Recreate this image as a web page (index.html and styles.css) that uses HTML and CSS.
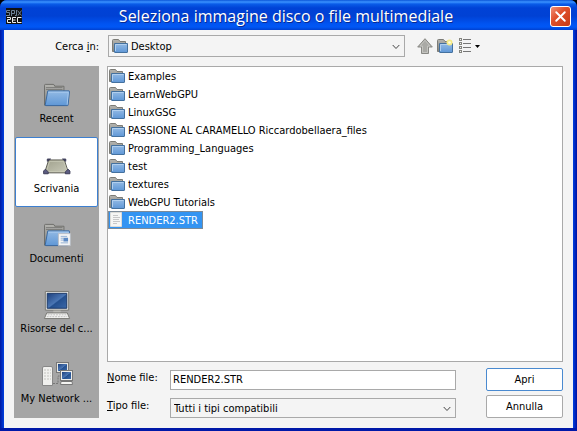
FILE: index.html
```html
<!DOCTYPE html>
<html lang="it">
<head>
<meta charset="utf-8">
<title>Seleziona immagine disco o file multimediale</title>
<link rel="stylesheet" href="styles.css">
</head>
<body>
<svg class="defs" aria-hidden="true">
  <defs>
    <linearGradient id="blue" x1="0" y1="0" x2="0" y2="1"><stop offset="0" stop-color="#93bae4"/><stop offset="1" stop-color="#5f97d6"/></linearGradient>
    <linearGradient id="gray" x1="0" y1="0" x2="0" y2="1"><stop offset="0" stop-color="#b4b4b0"/><stop offset="1" stop-color="#85857f"/></linearGradient>
    <linearGradient id="screen" x1="0" y1="0" x2="1" y2="1"><stop offset="0" stop-color="#1c3f7c"/><stop offset=".5" stop-color="#4a76b4"/><stop offset=".55" stop-color="#24508f"/><stop offset="1" stop-color="#3b68a8"/></linearGradient>
    <linearGradient id="desk" x1="0" y1="0" x2="1" y2="1"><stop offset="0" stop-color="#9fa08c"/><stop offset="1" stop-color="#c9cab9"/></linearGradient>
    <symbol id="folder" viewBox="0 0 16 16">
      <path d="M.5 13.500V2.500Q.5 1.500 1.500 1.500H6.500L8 3.500H13.500V13.500Z" fill="url(#gray)" stroke="#7c7c77"/>
      <path d="M2.500 5.500H15.500V14Q15.500 14.500 15 14.500H3Q2.500 14.500 2.500 14Z" fill="url(#blue)" stroke="#44719f"/>
      <path d="M3.500 13V6.500H14.500" fill="none" stroke="#b1cfee"/>
    </symbol>
    <symbol id="big-folder" viewBox="0 0 30 26">
      <path d="M1.500 24V2.500Q1.500 1.500 2.500 1.500H11Q12 1.500 12.500 3.500H22.500V24Z" fill="url(#gray)" stroke="#696966"/>
      <path d="M3 5H21M3 7H21" stroke="#777774"/>
      <path d="M5 8.500H28Q28.600 8.500 28.500 9.500L27 24Q27 24.500 26 24.500H3Q2 24.500 2.300 23.500Z" fill="url(#blue)" stroke="#34659e"/>
      <path d="M5.500 10H27.300L26 23.500" fill="none" stroke="#a8caee"/>
    </symbol>
  </defs>
</svg>
<div class="window">
  <header class="titlebar">
    <svg class="app-icon" viewBox="0 0 16 16" aria-hidden="true">
      <rect width="16" height="16" fill="#111"/>
      <path d="M4 2.500H.5V4.500H3.500V7.500H0M5.500 8V2.500H8.500V5.500H6M10.500 2V7.500H9M11.500 2.500L15.500 7.500M15.500 2.500L12 7.500" fill="none" stroke="#6d8095"/>
      <path d="M1 9.500H4.500V11.500H1.500V14.500H5M10 9.500H6.500V14.500H10M7 12H9.500M15.500 9.500H11.500V14.500H15.500" fill="none" stroke="#eee"/>
    </svg>
    <h1 class="title">Seleziona immagine disco o file multimediale</h1>
    <button class="close" type="button" aria-label="Chiudi">
      <svg viewBox="0 0 20 20"><path d="M5.500 5.500L14.500 14.500M14.500 5.500L5.500 14.500" stroke="#fff" stroke-width="2" stroke-linecap="round"/></svg>
    </button>
  </header>
  <form class="content">
    <label class="look-label" for="look">Cerca <u>i</u>n:</label>
    <div class="look-row">
      <div class="combo combo-look">
        <svg class="icon combo-icon" aria-hidden="true"><use href="#folder"/></svg>
        <select id="look"><option>Desktop</option></select>
        <svg class="chevron" viewBox="0 0 8 6" aria-hidden="true"><path d="M.7 1L4 4.500L7.300 1"/></svg>
      </div>
      <div class="tools">
        <button class="tool" type="button" aria-label="Livello superiore">
          <svg class="icon" viewBox="0 0 16 16"><path d="M8 .7L15.300 9H11.500V15.500H4.500V9H.7Z" fill="#a9a9a5" stroke="#888884"/><path d="M8 2.300L13 8H10.500V14.500H5.500V8H3Z" fill="none" stroke="#c4c4c0"/></svg>
        </button>
        <button class="tool" type="button" aria-label="Nuova cartella">
          <svg class="icon" viewBox="0 0 16 16"><use href="#folder" width="16" height="16"/><circle cx="12.500" cy="4.500" r="3" fill="#f5ea86"/><circle cx="12.500" cy="4.500" r="1.300" fill="#fffde0"/></svg>
        </button>
        <button class="tool tool-view" type="button" aria-label="Visualizza">
          <svg viewBox="0 0 22 16"><g fill="none" stroke="#85857f"><rect x=".5" y=".5" width="2" height="2"/><rect x=".5" y="4.500" width="2" height="2"/><rect x=".5" y="8.500" width="2" height="2"/><rect x=".5" y="12.500" width="2" height="2"/><path d="M4 1.500H12M4 5.500H12M4 9.500H12M4 13.500H12" stroke="#777"/></g><path d="M16 7H21L18.500 10Z"/></svg>
        </button>
      </div>
    </div>
    <nav class="places">
      <button class="place" type="button">
        <svg class="place-icon" viewBox="0 0 30 26"><use href="#big-folder"/></svg>
        <span>Recent</span>
      </button>
      <button class="place place-active" type="button">
        <svg class="place-icon" viewBox="0 0 30 26">
          <path d="M6 7.500H23L27.500 21.500H1.500Z" fill="url(#desk)" stroke="#55564c"/>
          <path d="M7 9H22L26 20H3.500Z" fill="none" stroke="#c8c9b6"/>
          <path d="M4.500 9V6.500H8ZM24.500 9V6.500H21Z" fill="#4a4a6c" stroke="#3b3b55"/>
          <path d="M.5 22.500V19.500L2.500 17.500L5.500 20.500V22.500ZM29 22.500V19.500L27 17.500L24 20.500V22.500Z" fill="#5b5b80" stroke="#3b3b55"/>
        </svg>
        <span>Scrivania</span>
      </button>
      <button class="place" type="button">
        <svg class="place-icon" viewBox="0 0 30 26">
          <use href="#big-folder"/>
          <path d="M16.500 11.500H29.500V24.500H16.500Z" fill="#f3f4f5" stroke="#b7bcc3"/>
          <path d="M19 14.500H26M19 16.500H22M19 18.500H22M19 21.500H27" stroke="#8faed4"/>
          <path d="M22 16H27V20H22Z" fill="#5c8ac5"/>
        </svg>
        <span>Documenti</span>
      </button>
      <button class="place" type="button">
        <svg class="place-icon place-icon-tall" viewBox="0 0 30 32">
          <path d="M2.500 1.500H27.500V21.500H2.500Z" fill="#e6e6e2" stroke="#74746f"/>
          <path d="M4.500 3.500H25.500V19.500H4.500Z" fill="url(#screen)" stroke="#173463"/>
          <path d="M11 22H19V25H11Z" fill="#b9b9b4"/>
          <path d="M4 24.500H26L28.500 30.500H1.500Z" fill="#f3f3f1" stroke="#767672"/>
          <path d="M5 26.500H25M4 28.500H26" stroke="#bbb" stroke-dasharray="2 1"/>
        </svg>
        <span>Risorse del c...</span>
      </button>
      <button class="place" type="button">
        <svg class="place-icon place-icon-net" viewBox="0 0 32 26">
          <path d="M12 22.500H17V15H21" fill="none" stroke="#777" stroke-dasharray="2 1"/>
          <rect x="15.500" y="1.500" width="12" height="10" fill="#e7e7e3" stroke="#777"/>
          <rect x="17" y="3" width="9" height="7" fill="url(#screen)"/>
          <path d="M1.500 24.500V7Q1.500 5.500 3 5.500H10Q11.500 5.500 11.500 7V24.500Z" fill="#f0f0ee" stroke="#888"/>
          <path d="M3 9H10M3 12H10M3 15H10M3 18H10" stroke="#c2c2be" stroke-dasharray="2 1"/>
          <rect x="19.500" y="9.500" width="12" height="10" fill="#ededeb" stroke="#777"/>
          <rect x="21" y="11" width="9" height="7" fill="url(#screen)"/>
          <path d="M20 20.500H31L31.500 23.500H19.500Z" fill="#f4f4f2" stroke="#777"/>
        </svg>
        <span>My Network ...</span>
      </button>
    </nav>
    <div class="main">
      <ul class="files">
        <li><button class="file" type="button"><svg class="icon"><use href="#folder"/></svg><span>Examples</span></button></li>
        <li><button class="file" type="button"><svg class="icon"><use href="#folder"/></svg><span>LearnWebGPU</span></button></li>
        <li><button class="file" type="button"><svg class="icon"><use href="#folder"/></svg><span>LinuxGSG</span></button></li>
        <li><button class="file" type="button"><svg class="icon"><use href="#folder"/></svg><span>PASSIONE AL CARAMELLO Riccardobellaera_files</span></button></li>
        <li><button class="file" type="button"><svg class="icon"><use href="#folder"/></svg><span>Programming_Languages</span></button></li>
        <li><button class="file" type="button"><svg class="icon"><use href="#folder"/></svg><span>test</span></button></li>
        <li><button class="file" type="button"><svg class="icon"><use href="#folder"/></svg><span>textures</span></button></li>
        <li><button class="file" type="button"><svg class="icon"><use href="#folder"/></svg><span>WebGPU Tutorials</span></button></li>
        <li><button class="file file-selected" type="button"><svg class="icon" viewBox="0 0 16 16"><path d="M1.500 .5H12.500V14.500H1.500Z" fill="#f6f6f4" stroke="#dcdcd8"/><path d="M4 3.500H9M4 5.500H11M4 7.500H10M4 9.500H11M4 11.500H8" stroke="#c8c8c8"/></svg><span>RENDER2.STR</span></button></li>
      </ul>
      <div class="bottom">
        <div class="fields">
          <label for="name"><u>N</u>ome file:</label>
          <input id="name" type="text" value="RENDER2.STR">
          <label for="type"><u>T</u>ipo file:</label>
          <div class="combo">
            <select id="type"><option>Tutti i tipi compatibili</option></select>
            <svg class="chevron" viewBox="0 0 8 6" aria-hidden="true"><path d="M.7 1L4 4.500L7.300 1"/></svg>
          </div>
        </div>
        <div class="actions">
          <button class="action action-default" type="button">Apri</button>
          <button class="action" type="button">Annulla</button>
        </div>
      </div>
    </div>
  </form>
</div>
</body>
</html>
```
FILE: styles.css
```css
* { box-sizing: border-box; }

body {
  margin: 0;
  background: #000;
  color: #000;
  font: 11px/16px "DejaVu Sans Condensed", "DejaVu Sans", sans-serif;
}

button, input, select { font: inherit; color: inherit; margin: 0; }
svg { display: block; flex: none; }
.defs { position: absolute; width: 0; height: 0; }
.icon { width: 16px; height: 16px; }

.window {
  display: flex;
  flex-direction: column;
  min-height: 100vh;
  padding: 0 4px 4px;
  background: linear-gradient(90deg, #0018a0, #0040e0 4px, #0040e0 calc(100% - 4px), #0010a0);
  border-radius: 7px 7px 0 0;
  overflow: hidden;
  box-shadow: inset 0 -4px #0018a8;
}

.titlebar {
  display: flex;
  align-items: center;
  height: 30px;
  margin: 0 -4px;
  padding: 2px 6px 0;
  background: linear-gradient(#0b55d8, #3b92ff 2px, #0a5ce8 4px, #0042d6 8px, #0041d4 16px, #0054f2 24px, #0057f5 27px, #0040d0);
}

.app-icon { width: 16px; height: 16px; }

.title {
  flex: 1;
  margin: 0;
  color: #fff;
  font-family: "Open Sans", "Noto Sans", sans-serif;
  font-size: 16px;
  font-weight: 400;
  line-height: 24px;
  text-align: center;
  text-shadow: 1px 1px #0a2a90;
}

.close {
  width: 21px;
  height: 21px;
  padding: 0;
  border: 1px solid #fff;
  border-radius: 3px;
  background: linear-gradient(135deg, #f09078, #e0512c 40%, #c83a14);
}

.content {
  flex: 1;
  display: grid;
  grid-template: 22px 1fr / 85px 1fr;
  gap: 9px 8px;
  padding: 5px 10px 10px;
  background: #f4f4f4;
}

.look-label { padding-top: 4px; text-align: right; }
.look-row { display: flex; gap: 12px; padding-left: 1px; }

.combo { position: relative; display: flex; }
.combo-look { flex: 1; }

.combo select {
  flex: 1;
  min-width: 0;
  padding: 1px 20px 0 3px;
  border: 1px solid #a9a9a9;
  border-radius: 0;
  background: #f4f4f4;
  appearance: none;
}

.combo-look select { padding-left: 22px; }
.combo-icon { position: absolute; left: 4px; top: 3px; }

.chevron {
  position: absolute;
  right: 5px;
  top: 50%;
  width: 8px;
  height: 6px;
  margin-top: -2px;
  fill: none;
  stroke: #444;
  pointer-events: none;
}

.tools { display: flex; align-items: center; gap: 4px; width: 146px; }
.tool { padding: 0; border: 0; background: none; }
.tool-view svg { width: 22px; height: 16px; }
.tool-view { margin-left: 2px; }

.places {
  display: flex;
  flex-direction: column;
  padding: 1px;
  background: #a5a5a5;
}

.place {
  display: flex;
  flex-direction: column;
  align-items: center;
  justify-content: flex-end;
  height: 70px;
  padding: 0 0 9px;
  border: 1px solid transparent;
  border-radius: 2px;
  background: none;
  white-space: nowrap;
}

.place-active { border-color: #3c7fd0; background: #fff; }
.place-icon { width: 28px; height: 24px; margin-bottom: 4px; }
.place-icon-tall { width: 28px; height: 30px; margin-bottom: 1px; }
.place-icon-net { width: 32px; height: 26px; }

.main { display: flex; flex-direction: column; gap: 6px; min-width: 0; }

.files {
  flex: 1;
  margin: 0;
  padding: 0;
  border: 1px solid #a9a9a9;
  background: #fff;
  list-style: none;
}

.file {
  display: flex;
  gap: 3px;
  height: 18px;
  padding: 1px 5px 0 1px;
  border: 0;
  background: none;
  line-height: 18px;
  white-space: nowrap;
}

.file-selected { background: #3394f2; color: #fff; outline: 1px solid #7d8b98; outline-offset: -1px; }

.bottom { display: flex; gap: 30px; }

.fields {
  flex: 1;
  display: grid;
  grid-template-columns: 55px 1fr;
  grid-auto-rows: 20px;
  gap: 8px;
  padding-top: 2px;
}

.fields input {
  min-width: 0;
  padding: 0 2px;
  border: 1px solid #a9a9a9;
  border-radius: 0;
  background: #fff;
}

.actions { display: flex; flex-direction: column; gap: 4px; width: 77px; }

.action {
  height: 23px;
  padding: 0;
  border: 1px solid #a9a9a9;
  border-radius: 2px;
  background: #fff;
}

.action-default { border-color: #4a8ad0; }
```
